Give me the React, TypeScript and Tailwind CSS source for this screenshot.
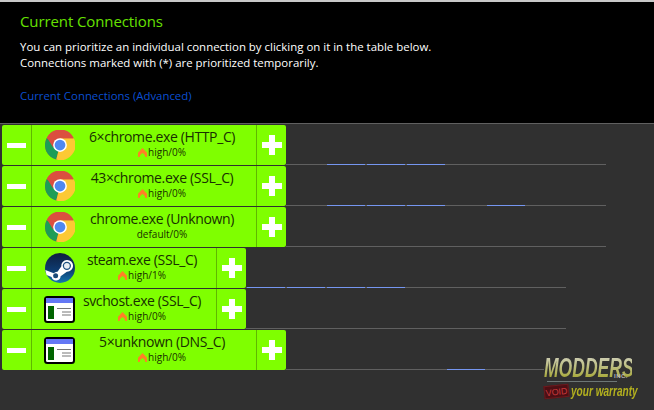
const font = { fontFamily: '"Open Sans", "Noto Sans", sans-serif' };

function Chrome() {
  return (
    <svg viewBox="0 0 48 48" className="w-[30px] h-[30px] ml-[13px] -mr-[7px] shrink-0 self-center">
      <circle cx="24" cy="24" r="24" fill="#db4f3f" />
      <path d="M24 24 L2.6 13 A24 24 0 0 0 18 47.2 Z" fill="#1d9d57" />
      <path d="M24 13 H46 A24 24 0 0 1 18 47.2 L24 24 Z" fill="#fcc934" />
      <path d="M24 13 H46 A24 24 0 0 0 3.2 12 L13 28 Z" fill="#db4f3f" />
      <circle cx="24" cy="24" r="11" fill="#fff" />
      <circle cx="24" cy="24" r="8.6" fill="#4f88f0" />
    </svg>
  );
}

function Steam() {
  return (
    <svg viewBox="0 0 48 48" className="w-[30px] h-[30px] ml-[13px] -mr-[7px] shrink-0 self-center">
      <defs>
        <linearGradient id="st" x1="0" y1="0" x2="0" y2="1">
          <stop offset="0" stopColor="#0f1f3f" />
          <stop offset="0.55" stopColor="#0e3a6e" />
          <stop offset="1" stopColor="#1477b0" />
        </linearGradient>
      </defs>
      <circle cx="24" cy="24" r="24" fill="url(#st)" />
      <path d="M0.5 27 L14 32.5 A7 7 0 0 1 20 30 L26 21.5 A9.5 9.5 0 1 1 35 30 L25 37 A7.4 7.4 0 0 1 10.5 38.5 L2.5 35 Z" fill="#fff" />
      <circle cx="17" cy="36.5" r="4" fill="#1a4a7a" />
      <circle cx="35" cy="20.5" r="6.6" fill="#1d4f80" />
      <circle cx="35" cy="20.5" r="4.6" fill="#e8eef2" />
    </svg>
  );
}

function Win() {
  return (
    <svg viewBox="0 0 31 27" className="w-[31px] h-[27px] ml-[12px] -mr-[7px] shrink-0 self-center">
      <rect x="1" y="1" width="29" height="25" rx="2.5" fill="#fff" stroke="#000" strokeWidth="2" />
      <rect x="2" y="2" width="27" height="5" fill="#6478f5" />
      <rect x="4" y="10" width="6" height="13" fill="#006400" />
      <path d="M13 12.5 H27 M18 16 H27 M18 19 H27" stroke="#777" strokeWidth="1" />
    </svg>
  );
}

function Flame() {
  return (
    <svg viewBox="0 0 9 9" className="w-[9px] h-[9px] shrink-0">
      <path d="M4.5 0 L9 4.8 V9 H7.4 C7 7 6 5.8 4.5 5 C3 5.8 2 7 1.6 9 H0 V4.8 Z" fill="#ff7f27" />
    </svg>
  );
}

type RowP = {
  wide: boolean;
  icon: React.ReactNode;
  title: string;
  sub: string;
  flame: boolean;
  blue: number[];
};

const rows: RowP[] = [
  { wide: true, icon: <Chrome />, title: "6×chrome.exe (HTTP_C)", sub: "high/0%", flame: true, blue: [1, 2, 3] },
  { wide: true, icon: <Chrome />, title: "43×chrome.exe (SSL_C)", sub: "high/0%", flame: true, blue: [1, 2, 3, 5] },
  { wide: true, icon: <Chrome />, title: "chrome.exe (Unknown)", sub: "default/0%", flame: false, blue: [] },
  { wide: false, icon: <Steam />, title: "steam.exe (SSL_C)", sub: "high/1%", flame: true, blue: [0, 1, 2, 3] },
  { wide: false, icon: <Win />, title: "svchost.exe (SSL_C)", sub: "high/0%", flame: true, blue: [] },
  { wide: true, icon: <Win />, title: "5×unknown (DNS_C)", sub: "high/0%", flame: true, blue: [4] },
];

const segs = [0, 1, 2, 3, 4, 5, 6, 7];

function Row({ r }: { r: RowP }) {
  return (
    <div className="flex items-end h-[41px] pl-[2px]">
      <div className={`${r.wide ? "w-[284px]" : "w-[244px]"} h-[40px] mb-[1px] shrink-0 flex bg-[#7fff00] rounded-[2px] text-[#183000]`}>
        <div className="w-[30px] flex items-center justify-center border-r border-[#5fb800] shrink-0">
          <div className="w-[19px] h-[5px] bg-white mr-[1px]" />
        </div>
        {r.icon}
        <div className="flex-1 min-w-0 flex flex-col items-center pt-[2px]">
          <div className="text-[14px] tracking-[-0.37px] leading-[20px] whitespace-nowrap">{r.title}</div>
          <div className="flex items-center gap-[1px] text-[10px] leading-[12px] mt-[-1px]">
            {r.flame && <Flame />}
            <span>{r.sub}</span>
          </div>
        </div>
        <div className="w-[30px] flex items-center justify-center border-l border-[#5fb800] shrink-0">
          <div className="relative w-[20px] h-[20px]">
            <div className="absolute left-0 top-[7px] w-[20px] h-[6px] bg-white" />
            <div className="absolute left-[7px] top-0 w-[6px] h-[20px] bg-white" />
          </div>
        </div>
      </div>
      <div className="w-[320px] h-[1px] mb-[1px] flex bg-[#606060] shrink-0">
        {segs.map((i) => (
          <div key={i} className="w-[40px] px-[1px]">
            {r.blue.includes(i) && <div className="h-[1px] bg-[#7596f0]" />}
          </div>
        ))}
      </div>
    </div>
  );
}

function Logo() {
  return (
    <div className="absolute left-[544px] top-[356px] w-[92px] h-[46px] select-none bg-[#303030]" style={{ fontFamily: '"Liberation Sans", sans-serif' }}>
      <div className="w-[136px] text-[27px] leading-[24px] font-bold italic text-transparent bg-clip-text bg-gradient-to-b from-[#cfcfb8] to-[#a5a51c] scale-x-[0.65] origin-left whitespace-nowrap">
        MODDERS
      </div>
      <div className="absolute left-[70px] top-[17px] text-[6px] leading-[7px] font-bold text-[#b8b8b8] tracking-[0.5px]">INC.</div>
      <div className="h-[1px] w-[70px] ml-[3px] mt-[1px] bg-[#6d7675]" />
      <div className="flex items-center mt-[3px]">
        <div className="w-[25px] h-[13px] shrink-0 flex items-center justify-center text-[9px] leading-[10px] text-[#c8383c] bg-[#4c0f14] border border-[#6b1a1e] -rotate-6">VOID</div>
        <div className="ml-[2px] text-[14px] leading-[13px] font-bold italic text-[#b3b01f] whitespace-nowrap scale-x-[0.72] origin-left">your warranty</div>
      </div>
    </div>
  );
}

export default function App() {
  return (
    <div className="relative w-[654px] h-[410px] overflow-hidden bg-[#303030]" style={font}>
      <div className="h-[124px] bg-black border-t-2 border-b border-t-[#c8c8c8] border-b-[#606060] pl-[20px] pt-[8px]">
        <div className="text-[15px] tracking-[-0.1px] leading-[22px] text-[#66e000]">Current Connections</div>
        <div className="mt-[7px] text-[11.45px] leading-[16px] text-white">
          You can prioritize an individual connection by clicking on it in the table below.
          <br />
          Connections marked with (*) are prioritized temporarily.
        </div>
        <div className="mt-[17px] text-[11.4px] leading-[16px] text-[#0b4fd0]">Current Connections (Advanced)</div>
      </div>
      <div className="pt-[1px]">
        {rows.map((r) => (
          <Row key={r.title} r={r} />
        ))}
      </div>
      <Logo />
    </div>
  );
}
